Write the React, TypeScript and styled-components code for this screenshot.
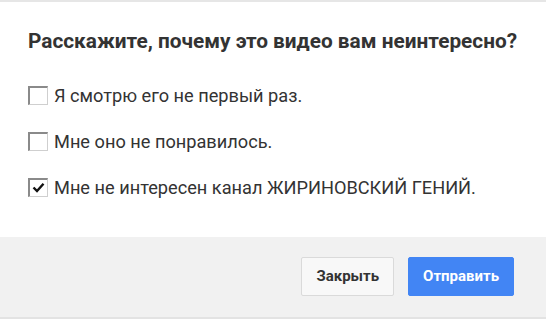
import React from "react";
import styled, { createGlobalStyle } from "styled-components";

const Global = createGlobalStyle`
  html, body { margin: 0; padding: 0; background: #fff; }
  body { font-family: Roboto, "Noto Sans", Arial, sans-serif; }
`;

const Dialog = styled.div`
  width: 546px;
  height: 319px;
  display: flex;
  flex-direction: column;
  background: #fff;
  border-top: 2px solid #e6e6e6;
  box-sizing: border-box;
`;

const Body = styled.div`
  flex: 1;
  padding: 26px 28px 0 28px;
`;

const Title = styled.h2`
  margin: 0 0 29px 0;
  font-size: 20.8px;
  line-height: 26px;
  font-weight: 700;
  color: #333;
`;

const List = styled.div`
  display: flex;
  flex-direction: column;
  gap: 22px;
`;

const Row = styled.label`
  display: flex;
  align-items: center;
  gap: 6px;
  height: 24px;
  font-size: 18.2px;
  color: #333;
`;

const Box = styled.span`
  width: 20px;
  height: 19px;
  box-sizing: border-box;
  border: 1px solid #cfcfcf;
  border-left: 2px solid #8a8a8a;
  border-top: 2px solid #8a8a8a;
  background: #fff;
  display: flex;
  align-items: center;
  justify-content: center;
`;

const Footer = styled.div`
  height: 82px;
  background: #f1f1f1;
  border-bottom: 2px solid #e3e3e3;
  box-sizing: border-box;
  display: flex;
  justify-content: flex-end;
  align-items: center;
  gap: 14px;
  padding: 0 32px 2px 0;
`;

const Button = styled.button<{ $primary?: boolean }>`
  height: 39px;
  padding: 0 14px;
  border-radius: 2px;
  font-family: Roboto, Arial, sans-serif;
  font-size: 15px;
  font-weight: 700;
  cursor: pointer;
  border: 1px solid ${(p) => (p.$primary ? "#4285f4" : "#dadada")};
  background: ${(p) => (p.$primary ? "#4285f4" : "#f8f8f8")};
  color: ${(p) => (p.$primary ? "#fff" : "#333")};
`;

const items = [
  { text: "Я смотрю его не первый раз.", checked: false },
  { text: "Мне оно не понравилось.", checked: false },
  { text: "Мне не интересен канал ЖИРИНОВСКИЙ ГЕНИЙ.", checked: true },
];

export default function App() {
  return (
    <>
      <Global />
      <Dialog>
        <Body>
          <Title>Расскажите, почему это видео вам неинтересно?</Title>
          <List>
            {items.map((it) => (
              <Row key={it.text}>
                <Box>
                  {it.checked && (
                    <svg width="13" height="11" viewBox="0 0 13 11">
                      <path d="M1.5 5.5 L5 9 L11.5 1.8" fill="none" stroke="#111" strokeWidth="2.4" />
                    </svg>
                  )}
                </Box>
                {it.text}
              </Row>
            ))}
          </List>
        </Body>
        <Footer>
          <Button>Закрыть</Button>
          <Button $primary>Отправить</Button>
        </Footer>
      </Dialog>
    </>
  );
}
